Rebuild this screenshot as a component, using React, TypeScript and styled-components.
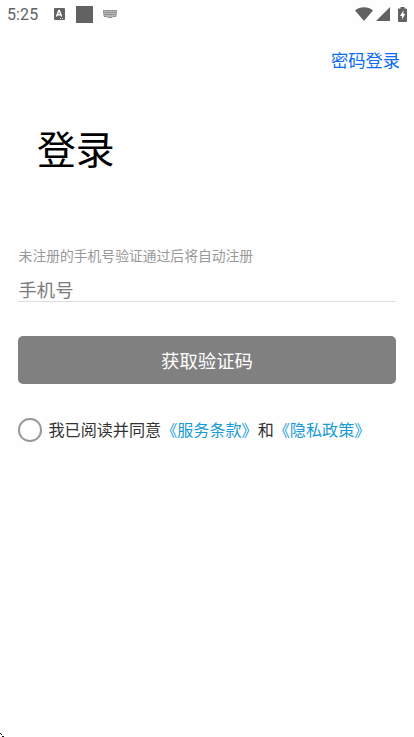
import React from "react";
import styled, { createGlobalStyle } from "styled-components";

const GlobalStyle = createGlobalStyle`
  * { box-sizing: border-box; }
  body { margin: 0; background: #fefefe; }
  button, input { font: inherit; border: 0; padding: 0; margin: 0; background: none; }
`;

const Screen = styled.div`
  position: relative;
  display: flex;
  flex-direction: column;
  height: 737px;
  overflow: hidden;
  background: #fefefe;
  font-family: Roboto, "Noto Sans CJK SC", sans-serif;
`;

const StatusBar = styled.header`
  display: flex;
  justify-content: space-between;
  height: 28px;
  padding: 0 7px;
  color: #626262;
`;

const StatusGroup = styled.div`
  display: flex;
  align-items: center;
`;

const Clock = styled.span`
  width: 47px;
  font-size: 16px;
  line-height: 28px;
  letter-spacing: 0.1px;
  padding-top: 1px;
`;

const StatusIcon = styled.svg<{ $gap?: number }>`
  display: block;
  flex: none;
  margin-left: ${(p) => p.$gap ?? 0}px;
`;

const TopActions = styled.nav`
  display: flex;
  justify-content: flex-end;
  padding: 19px 14px 0 0;
`;

const PasswordLogin = styled.button`
  && {
    color: #0a6cf5;
    font-size: 17.25px;
    line-height: 28px;
  }
`;

const Title = styled.h1`
  margin: 46px 0 0 37px;
  color: #000;
  font-size: 38.8px;
  font-weight: 400;
  line-height: 60px;
`;

const Form = styled.form`
  display: flex;
  flex-direction: column;
  padding: 65px 18px 0;
`;

const Hint = styled.p`
  margin: 0;
  padding-left: 0.6px;
  color: #999;
  font-size: 13.8px;
  line-height: 20px;
`;

const PhoneInput = styled.input`
  && {
    height: 36px;
    border-bottom: 1px solid #dedede;
    border-radius: 0;
    outline: none;
    color: #333;
    font-size: 18.3px;
    padding: 13px 0 0 0.6px;
  }
  &::placeholder { color: #7b7b7b; opacity: 1; }
`;

const SubmitButton = styled.button`
  && {
    height: 48px;
    margin-top: 34px;
    padding-top: 3px;
    border-radius: 5px;
    background: #808080;
    color: #fff;
    font-size: 18.4px;
    line-height: 45px;
  }
`;

const Agreement = styled.label`
  display: flex;
  align-items: center;
  height: 24px;
  margin-top: 34px;
  color: #333;
  font-size: 16.1px;
  line-height: 24px;
  white-space: nowrap;
`;

const Radio = styled.span`
  width: 23.4px;
  height: 23.4px;
  margin: 0 6.7px 0 0.4px;
  border: 2px solid #999;
  border-radius: 50%;
`;

const AgreementText = styled.span`
  padding-top: 2px;
`;

const PolicyLink = styled.a`
  color: #169bd5;
`;

const CornerMark = styled.svg`
  position: absolute;
  left: 0;
  bottom: 0;
`;

export default function App() {
  return (
    <Screen lang="zh-CN">
      <GlobalStyle />
      <StatusBar>
        <StatusGroup>
          <Clock>5:25</Clock>
          <StatusIcon width="11" height="12" viewBox="0 0 11 12">
            <rect width="11" height="12" rx="1" fill="currentColor" />
            <path d="M2.5 8.5 4.8 2.5h.5L7.6 8.5M3.5 6.7h3" fill="none" stroke="#fff" strokeWidth="1.4" />
            <path d="M6 10.5h1M8 10.5h1" stroke="#ddd" />
          </StatusIcon>
          <StatusIcon $gap={11} width="17" height="17" viewBox="0 0 17 17">
            <rect width="17" height="17" fill="currentColor" />
          </StatusIcon>
          <StatusIcon $gap={10} width="14" height="8" viewBox="0 0 14 8">
            <path d="M0 0h14v5l-1 2h-3L9 8H5L4 7H1L0 5Z" fill="#b4b4b4" />
            <path d="M0 .5h14M0 2.5h14M1 4.5h12M1 6.5h3M5 7.5h4M10 6.5h3" fill="none" stroke="#858585" strokeDasharray="1.4 0.8" />
          </StatusIcon>
        </StatusGroup>
        <StatusGroup>
          <StatusIcon width="18" height="14" viewBox="0 0 18 14">
            <path d="M0 3.5C5-.8 13-.8 18 3.5L9 14Z" fill="currentColor" />
          </StatusIcon>
          <StatusIcon $gap={3} width="14" height="14" viewBox="0 0 14 14">
            <path d="M14 0v14H0Z" fill="currentColor" />
          </StatusIcon>
          <StatusIcon $gap={8} width="9" height="15" viewBox="0 0 9 15">
            <path d="M2.5 0h4v1.5H8a1 1 0 0 1 1 1V14a1 1 0 0 1-1 1H1a1 1 0 0 1-1-1V2.5a1 1 0 0 1 1-1h1.5Z" fill="currentColor" />
            <path d="M5.5 3.5 2 9h2v3.5L7.2 7H5.5Z" fill="#fff" />
          </StatusIcon>
        </StatusGroup>
      </StatusBar>
      <TopActions>
        <PasswordLogin>密码登录</PasswordLogin>
      </TopActions>
      <Title>登录</Title>
      <Form>
        <Hint>未注册的手机号验证通过后将自动注册</Hint>
        <PhoneInput type="tel" placeholder="手机号" />
        <SubmitButton type="button">获取验证码</SubmitButton>
        <Agreement>
          <Radio />
          <AgreementText>
            我已阅读并同意<PolicyLink>《服务条款》</PolicyLink>和<PolicyLink>《隐私政策》</PolicyLink>
          </AgreementText>
        </Agreement>
      </Form>
      <CornerMark width="4" height="4" viewBox="0 0 4 4" shapeRendering="crispEdges">
        <path d="M0 0h1v1H0zM1 1h1v1H1zM2 3h2v1H2z" fill="#111" />
      </CornerMark>
    </Screen>
  );
}
